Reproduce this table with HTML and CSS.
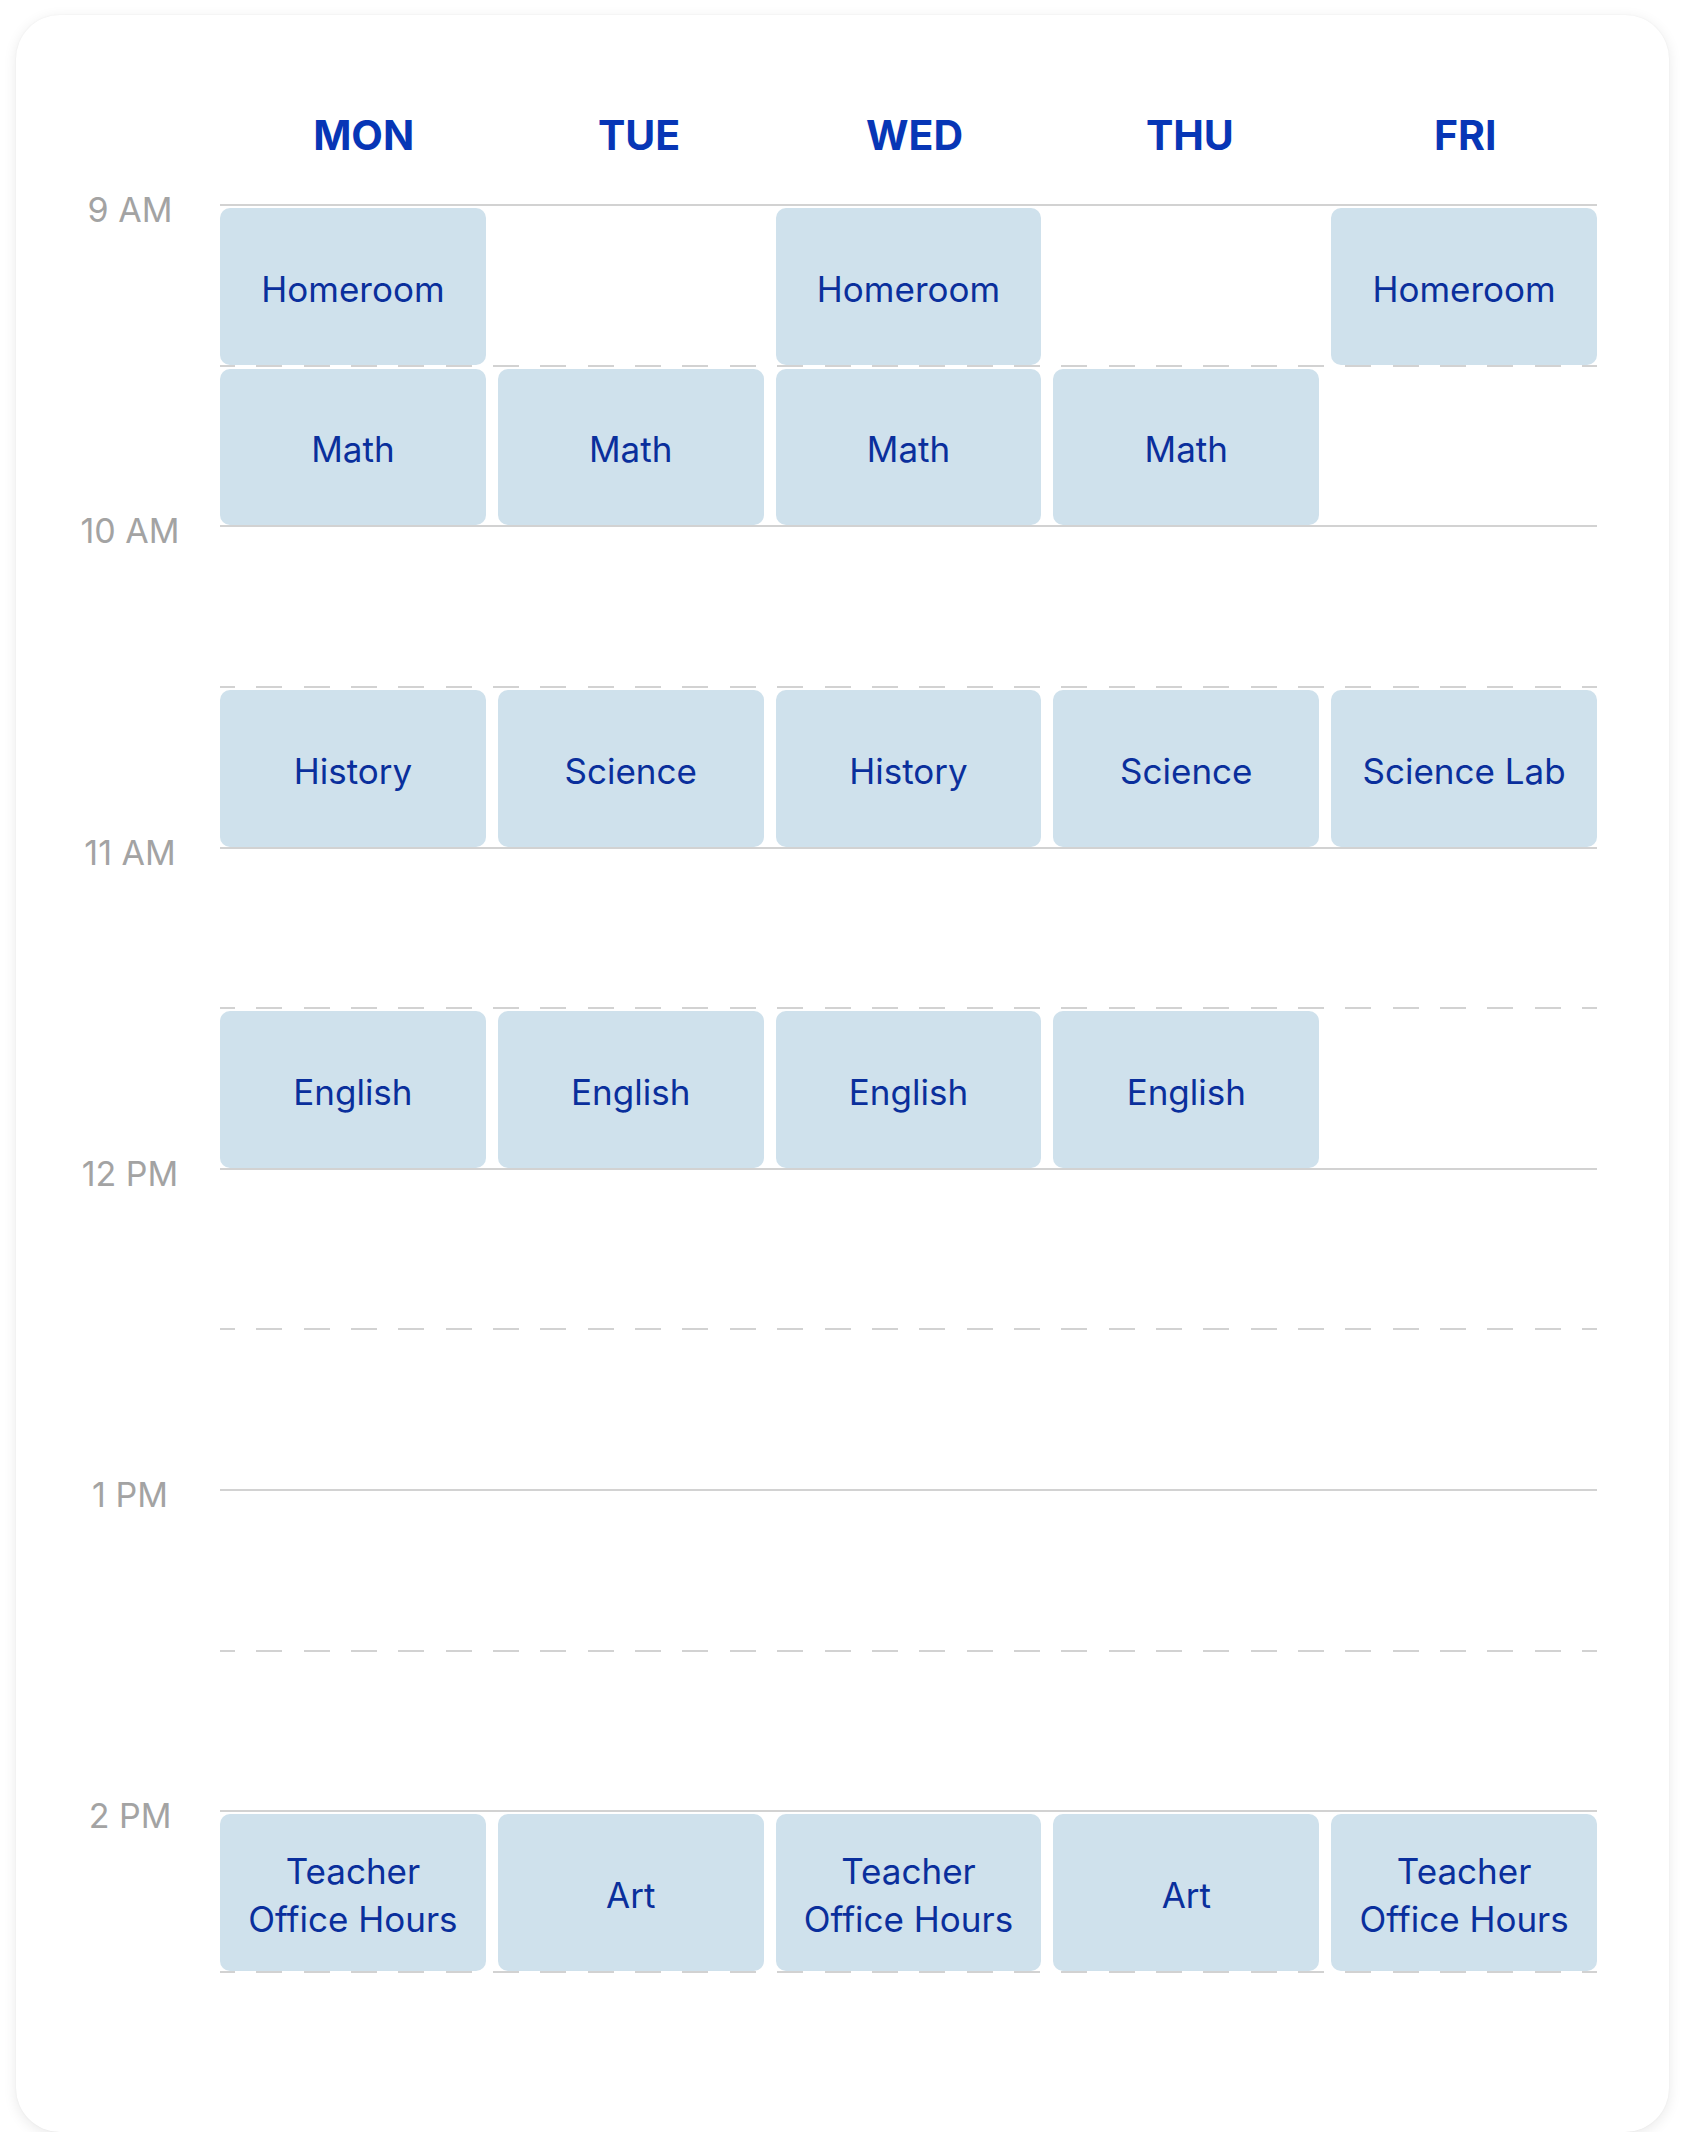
FILE: index.html
```html
<!DOCTYPE html>
<html lang="en">
<head>
<meta charset="UTF-8">
<title>Weekly Class Schedule</title>
<link rel="stylesheet" href="styles.css">
</head>
<body>

<div class="card">
    <div class="days">
        <div class="day">MON</div>
        <div class="day">TUE</div>
        <div class="day">WED</div>
        <div class="day">THU</div>
        <div class="day">FRI</div>
    </div>

    <!-- 9:00 -->
    <div class="slot">
        <div class="time">9 AM</div>
        <div class="cells hour">
            <div class="event">Homeroom</div>
            <div></div>
            <div class="event">Homeroom</div>
            <div></div>
            <div class="event">Homeroom</div>
        </div>
    </div>
    <!-- 9:30 -->
    <div class="slot">
        <div class="time"></div>
        <div class="cells half">
            <div class="event">Math</div>
            <div class="event">Math</div>
            <div class="event">Math</div>
            <div class="event">Math</div>
            <div></div>
        </div>
    </div>
    <!-- 10:00 -->
    <div class="slot">
        <div class="time">10 AM</div>
        <div class="cells hour"></div>
    </div>
    <!-- 10:30 -->
    <div class="slot">
        <div class="time"></div>
        <div class="cells half">
            <div class="event">History</div>
            <div class="event">Science</div>
            <div class="event">History</div>
            <div class="event">Science</div>
            <div class="event">Science Lab</div>
        </div>
    </div>
    <!-- 11:00 -->
    <div class="slot">
        <div class="time">11 AM</div>
        <div class="cells hour"></div>
    </div>
    <!-- 11:30 -->
    <div class="slot">
        <div class="time"></div>
        <div class="cells half">
            <div class="event">English</div>
            <div class="event">English</div>
            <div class="event">English</div>
            <div class="event">English</div>
            <div></div>
        </div>
    </div>
    <!-- 12:00 -->
    <div class="slot">
        <div class="time">12 PM</div>
        <div class="cells hour"></div>
    </div>
    <!-- 12:30 -->
    <div class="slot">
        <div class="time"></div>
        <div class="cells half"></div>
    </div>
    <!-- 1:00 -->
    <div class="slot">
        <div class="time">1 PM</div>
        <div class="cells hour"></div>
    </div>
    <!-- 1:30 -->
    <div class="slot">
        <div class="time"></div>
        <div class="cells half"></div>
    </div>
    <!-- 2:00 -->
    <div class="slot">
        <div class="time">2 PM</div>
        <div class="cells hour">
            <div class="event">Teacher<br>Office Hours</div>
            <div class="event">Art</div>
            <div class="event">Teacher<br>Office Hours</div>
            <div class="event">Art</div>
            <div class="event">Teacher<br>Office Hours</div>
        </div>
    </div>
    <!-- 2:30 -->
    <div class="slot">
        <div class="time"></div>
        <div class="cells half"></div>
    </div>
</div>

</body>
</html>
```

FILE: styles.css
```css
/* schedule card */
body {
    margin: 0;
    background-color: #ffffff;
    font-family: "Inter", "Noto Sans", sans-serif;
}
.card {
    width: 1653px;
    margin: 15px 0 0 16px;
    padding: 0 72px 0 38px;
    box-sizing: border-box;
    background-color: #ffffff;
    border-radius: 44px;
    box-shadow: 0 3px 14px rgba(0, 0, 0, 0.09), 0 0 2px rgba(0, 0, 0, 0.05);
}

/* day headers */
.days {
    display: grid;
    grid-template-columns: repeat(5, 1fr);
    height: 189px;
    box-sizing: border-box;
    padding-top: 96px;
    margin: 0 -6px 0 172px;
}
.day {
    text-align: center;
    font-size: 41px;
    font-weight: 700;
    line-height: 48px;
    color: #0736b6;
}

/* half hour rows */
.slot {
    display: flex;
    height: 160.65px;
}
.time {
    width: 152px;
    margin-right: 14px;
    margin-top: -15px;
    text-align: center;
    font-size: 34px;
    line-height: 42px;
    color: #a3a3a3;
}
.cells {
    flex: 1;
    display: grid;
    grid-template-columns: repeat(5, 1fr);
    column-gap: 12px;
    padding: 4px 0 0;
    box-sizing: border-box;
}
.cells.hour {
    background: linear-gradient(#d2d2d2, #d2d2d2) top left / 100% 2px no-repeat;
}
.cells.half {
    background: repeating-linear-gradient(to right,
        #d2d2d2 0 15px,
        transparent 15px 36.35px,
        #d2d2d2 36.35px 47.35px) top left / 100% 2px no-repeat;
}

/* class blocks */
.event {
    display: flex;
    align-items: center;
    justify-content: center;
    padding-top: 5px;
    box-sizing: border-box;
    background-color: #cfe1ec;
    border-radius: 10px;
    text-align: center;
    font-size: 35px;
    line-height: 48px;
    color: #0a2f9c;
}
```
